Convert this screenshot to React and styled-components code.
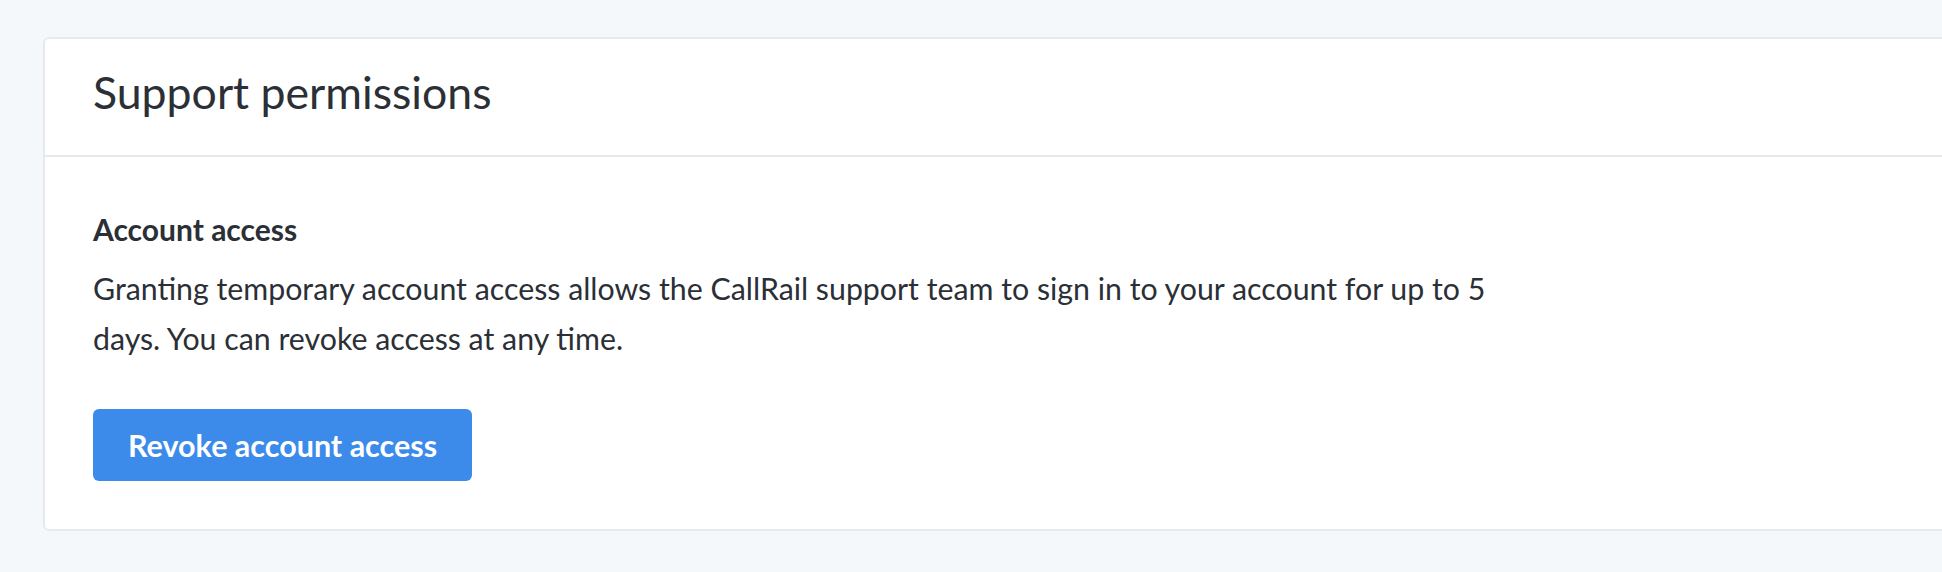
import React from "react";
import styled, { createGlobalStyle } from "styled-components";

const GlobalStyle = createGlobalStyle`
  html, body {
    margin: 0;
    padding: 0;
    background: #f5f8fa;
    overflow: hidden;
  }
  body {
    font-family: "Lato", "Noto Sans", sans-serif;
    color: #2b2f36;
  }
`;

const Page = styled.div`
  min-height: 572px;
  padding: 37px 0 0 43px;
  box-sizing: border-box;
`;

const Card = styled.section`
  width: 1940px;
  background: #ffffff;
  border: 2px solid #e6eaef;
  border-radius: 6px;
  box-sizing: border-box;
`;

const CardHeader = styled.header`
  height: 118px;
  display: flex;
  align-items: center;
  padding: 0 48px 10px;
  border-bottom: 2px solid #e6eaef;
  box-sizing: border-box;
`;

const Title = styled.h2`
  margin: 0;
  font-size: 44.6px;
  font-weight: 400;
  line-height: 1.2;
  color: #2b2f36;
`;

const CardBody = styled.div`
  padding: 52px 48px 48px;
`;

const SectionTitle = styled.h3`
  margin: 0;
  font-size: 30px;
  font-weight: 700;
  line-height: 40px;
  color: #2b2f36;
`;

const Text = styled.p`
  margin: 14px 0 0;
  max-width: 1440px;
  font-size: 30.3px;
  line-height: 50px;
  color: #2b2f36;
`;

const Button = styled.button`
  margin-top: 46px;
  height: 72px;
  padding: 0 35px;
  border: none;
  border-radius: 6px;
  background: #3c8beb;
  color: #ffffff;
  font-family: inherit;
  font-size: 30.5px;
  font-weight: 700;
  cursor: pointer;
`;

function App() {
  return (
    <Page>
      <GlobalStyle />
      <Card>
        <CardHeader>
          <Title>Support permissions</Title>
        </CardHeader>
        <CardBody>
          <SectionTitle>Account access</SectionTitle>
          <Text>
            Granting temporary account access allows the CallRail support team
            to sign in to your account for up to 5 days. You can revoke access
            at any time.
          </Text>
          <Button>Revoke account access</Button>
        </CardBody>
      </Card>
    </Page>
  );
}

export default App;
